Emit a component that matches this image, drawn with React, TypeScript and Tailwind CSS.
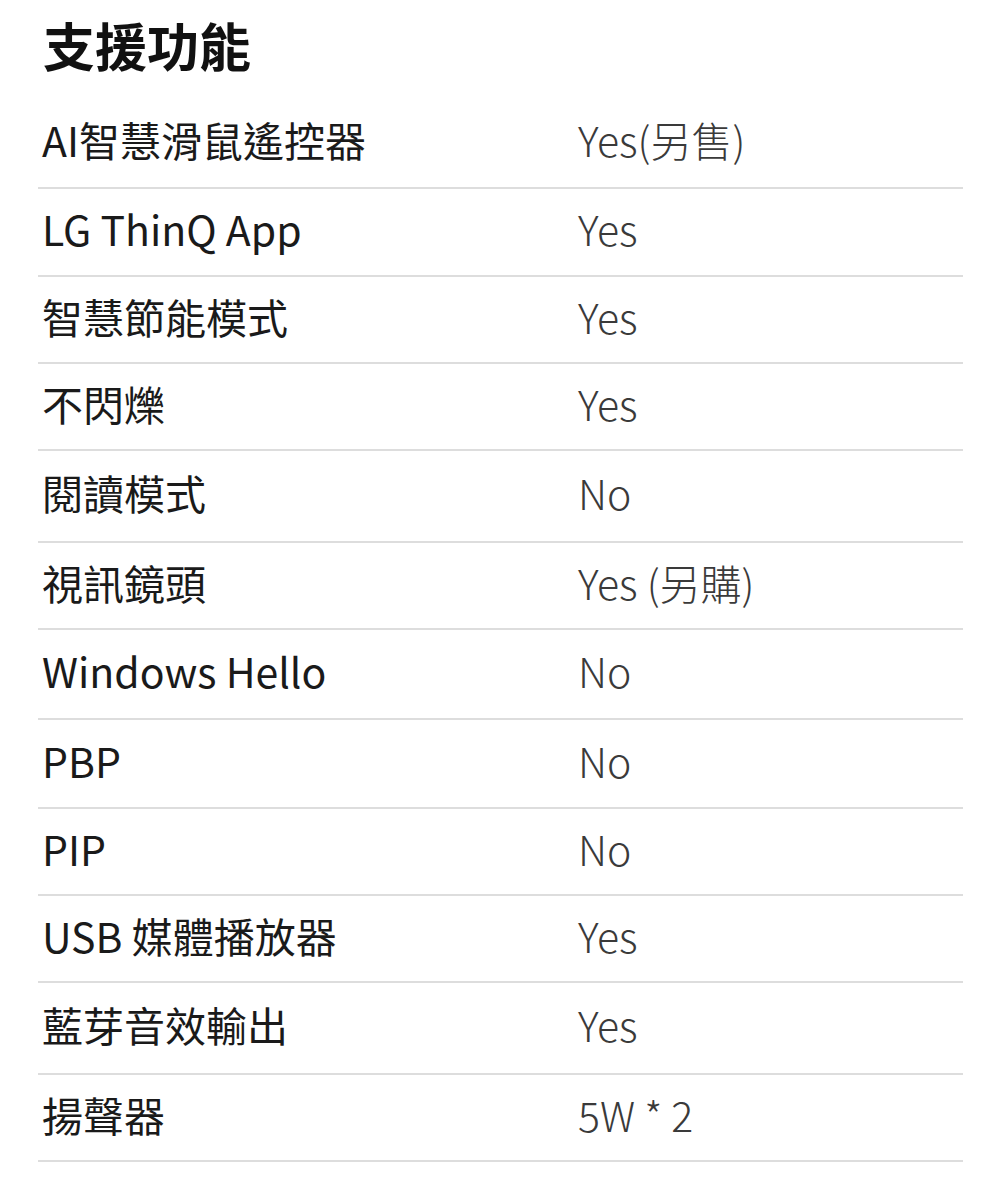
const rows: { label: string; value: string; h: string }[] = [
  { label: 'AI智慧滑鼠遙控器', value: 'Yes(另售)', h: 'h-[90px]' },
  { label: 'LG ThinQ App', value: 'Yes', h: 'h-[88px]' },
  { label: '智慧節能模式', value: 'Yes', h: 'h-[87px]' },
  { label: '不閃爍', value: 'Yes', h: 'h-[87px]' },
  { label: '閱讀模式', value: 'No', h: 'h-[92px]' },
  { label: '視訊鏡頭', value: 'Yes (另購)', h: 'h-[87px]' },
  { label: 'Windows Hello', value: 'No', h: 'h-[90px]' },
  { label: 'PBP', value: 'No', h: 'h-[89px]' },
  { label: 'PIP', value: 'No', h: 'h-[87px]' },
  { label: 'USB 媒體播放器', value: 'Yes', h: 'h-[87px]' },
  { label: '藍芽音效輸出', value: 'Yes', h: 'h-[92px]' },
  { label: '揚聲器', value: '5W * 2', h: 'h-[87px]' },
]

export default function App() {
  return (
    <div
      className="w-[1000px] h-[1180px] bg-white text-[#1a1a1a]"
      style={{ fontFamily: '"Noto Sans CJK TC", "Noto Sans", sans-serif' }}
    >
      <div className="ml-[38px] w-[925px]">
        <div className="h-[99px] flex items-center pl-[5px] pb-[10px]">
          <h2 className="text-[52px] font-bold leading-none text-[#111]">支援功能</h2>
        </div>
        {rows.map((r) => (
          <div key={r.label} className={`${r.h} flex items-center pb-[7px] border-b-2 border-[#dddddd]`}>
            <div className="w-[540px] pl-[4px] text-[41px] leading-none">{r.label}</div>
            <div className="flex-1 text-[41px] leading-none font-light text-[#3a3a3a]">{r.value}</div>
          </div>
        ))}
      </div>
    </div>
  )
}
